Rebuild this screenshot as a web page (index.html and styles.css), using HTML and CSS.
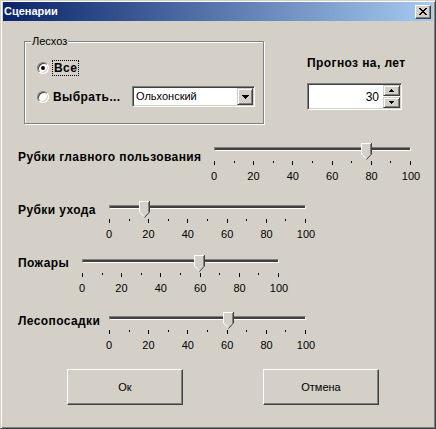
FILE: index.html
```html
<!DOCTYPE html>
<html lang="ru">
<head>
<meta charset="utf-8">
<title>Сценарии</title>
<link rel="stylesheet" href="styles.css">
</head>
<body>
<div class="window">
  <div class="titlebar">
    <span class="title">Сценарии</span>
    <button class="close" aria-label="Закрыть">
      <svg width="8" height="7" viewBox="0 0 8 7" shape-rendering="crispEdges"><path d="M0 0h2v1H0zM6 0h2v1H6zM1 1h2v1H1zM5 1h2v1H5zM2 2h4v1H2zM3 3h2v1H3zM2 4h4v1H2zM1 5h2v1H1zM5 5h2v1H5zM0 6h2v1H0zM6 6h2v1H6z" fill="#000"/></svg>
    </button>
  </div>
  <div class="content">
    <div class="top-row">
      <div class="group">
        <span class="legend">Лесхоз</span>
        <div class="opt opt-all">
          <span class="radio checked"></span>
          <span class="opt-label focus">Все</span>
        </div>
        <div class="opt opt-pick">
          <span class="radio"></span>
          <span class="opt-label">Выбрать...</span>
          <div class="combo">
            <span class="combo-val">Ольхонский</span>
            <span class="combo-btn"><svg width="7" height="4" viewBox="0 0 7 4" shape-rendering="crispEdges"><path d="M0 0h7v1H0zM1 1h5v1H1zM2 2h3v1H2zM3 3h1v1H3z" fill="#000"/></svg></span>
          </div>
        </div>
      </div>
      <div class="forecast">
        <div class="forecast-title">Прогноз на, лет</div>
        <div class="spin">
          <span class="spin-val">30</span>
          <div class="spin-btns">
            <span class="spin-btn"><svg width="5" height="3" viewBox="0 0 5 3" shape-rendering="crispEdges"><path d="M2 0h1v1H2zM1 1h3v1H1zM0 2h5v1H0z" fill="#000"/></svg></span>
            <span class="spin-btn"><svg width="5" height="3" viewBox="0 0 5 3" shape-rendering="crispEdges"><path d="M0 0h5v1H0zM1 1h3v1H1zM2 2h1v1H2z" fill="#000"/></svg></span>
          </div>
        </div>
      </div>
    </div>

    <div class="row row-1">
      <span class="row-label">Рубки главного пользования</span>
      <div class="slider">
        <div class="rail"><span class="thumb" style="left: calc(78% - 6px)"><svg width="11" height="17" viewBox="0 0 11 17" shape-rendering="crispEdges"><polygon points="0,0 11,0 11,11 5.5,16.5 0,11" fill="#d4d0c8"/><path d="M0.5 11V0.5H10" stroke="#fff" fill="none"/><path d="M0.5 11L5 15.5" stroke="#fff" fill="none" shape-rendering="auto"/><path d="M10.5 0V11" stroke="#404040" fill="none"/><path d="M9.5 1V11" stroke="#808080" fill="none"/><path d="M10.5 11L5.5 16.5" stroke="#404040" fill="none" shape-rendering="auto"/></svg></span></div>
        <div class="ticks"><i class="major"></i><i></i><i class="major"></i><i></i><i class="major"></i><i></i><i class="major"></i><i></i><i class="major"></i><i></i><i class="major"></i></div>
        <div class="scale"><span>0</span><span>20</span><span>40</span><span>60</span><span>80</span><span>100</span></div>
      </div>
    </div>

    <div class="row row-2">
      <span class="row-label">Рубки ухода</span>
      <div class="slider">
        <div class="rail"><span class="thumb" style="left: calc(18% - 6px)"><svg width="11" height="17" viewBox="0 0 11 17" shape-rendering="crispEdges"><polygon points="0,0 11,0 11,11 5.5,16.5 0,11" fill="#d4d0c8"/><path d="M0.5 11V0.5H10" stroke="#fff" fill="none"/><path d="M0.5 11L5 15.5" stroke="#fff" fill="none" shape-rendering="auto"/><path d="M10.5 0V11" stroke="#404040" fill="none"/><path d="M9.5 1V11" stroke="#808080" fill="none"/><path d="M10.5 11L5.5 16.5" stroke="#404040" fill="none" shape-rendering="auto"/></svg></span></div>
        <div class="ticks"><i class="major"></i><i></i><i class="major"></i><i></i><i class="major"></i><i></i><i class="major"></i><i></i><i class="major"></i><i></i><i class="major"></i></div>
        <div class="scale"><span>0</span><span>20</span><span>40</span><span>60</span><span>80</span><span>100</span></div>
      </div>
    </div>

    <div class="row row-3">
      <span class="row-label">Пожары</span>
      <div class="slider">
        <div class="rail"><span class="thumb" style="left: calc(60% - 6px)"><svg width="11" height="17" viewBox="0 0 11 17" shape-rendering="crispEdges"><polygon points="0,0 11,0 11,11 5.5,16.5 0,11" fill="#d4d0c8"/><path d="M0.5 11V0.5H10" stroke="#fff" fill="none"/><path d="M0.5 11L5 15.5" stroke="#fff" fill="none" shape-rendering="auto"/><path d="M10.5 0V11" stroke="#404040" fill="none"/><path d="M9.5 1V11" stroke="#808080" fill="none"/><path d="M10.5 11L5.5 16.5" stroke="#404040" fill="none" shape-rendering="auto"/></svg></span></div>
        <div class="ticks"><i class="major"></i><i></i><i class="major"></i><i></i><i class="major"></i><i></i><i class="major"></i><i></i><i class="major"></i><i></i><i class="major"></i></div>
        <div class="scale"><span>0</span><span>20</span><span>40</span><span>60</span><span>80</span><span>100</span></div>
      </div>
    </div>

    <div class="row row-4">
      <span class="row-label">Лесопосадки</span>
      <div class="slider">
        <div class="rail"><span class="thumb" style="left: calc(61% - 6px)"><svg width="11" height="17" viewBox="0 0 11 17" shape-rendering="crispEdges"><polygon points="0,0 11,0 11,11 5.5,16.5 0,11" fill="#d4d0c8"/><path d="M0.5 11V0.5H10" stroke="#fff" fill="none"/><path d="M0.5 11L5 15.5" stroke="#fff" fill="none" shape-rendering="auto"/><path d="M10.5 0V11" stroke="#404040" fill="none"/><path d="M9.5 1V11" stroke="#808080" fill="none"/><path d="M10.5 11L5.5 16.5" stroke="#404040" fill="none" shape-rendering="auto"/></svg></span></div>
        <div class="ticks"><i class="major"></i><i></i><i class="major"></i><i></i><i class="major"></i><i></i><i class="major"></i><i></i><i class="major"></i><i></i><i class="major"></i></div>
        <div class="scale"><span>0</span><span>20</span><span>40</span><span>60</span><span>80</span><span>100</span></div>
      </div>
    </div>

    <div class="buttons">
      <button class="btn">Ок</button>
      <button class="btn">Отмена</button>
    </div>
  </div>
</div>
</body>
</html>
```

FILE: styles.css
```css
html, body {
  margin: 0;
  padding: 0;
  background: #d4d0c8;
}

.window {
  width: 436px;
  height: 429px;
  box-sizing: border-box;
  border: 1px solid;
  border-color: #d4d0c8 #404040 #404040 #d4d0c8;
  box-shadow: inset 1px 1px #fff, inset -1px -1px #808080;
  padding: 1px 2px 2px 2px;
  background: #d4d0c8;
  font-family: "Liberation Sans", Arial, sans-serif;
  color: #000;
}

.titlebar {
  height: 19px;
  display: flex;
  align-items: center;
  justify-content: space-between;
  background: linear-gradient(to right, #0a246a, #a6caf0);
  padding: 0 2px 0 1px;
}

.title {
  color: #fff;
  font-weight: bold;
  font-size: 11px;
  line-height: 13px;
}

.close {
  width: 16px;
  height: 14px;
  box-sizing: border-box;
  padding: 0;
  margin: 0;
  display: flex;
  align-items: center;
  justify-content: center;
  background: #d4d0c8;
  border: 1px solid;
  border-color: #fff #404040 #404040 #fff;
  box-shadow: inset -1px -1px #808080;
}

.content {
  padding: 20px 0 0 15px;
}

.top-row {
  display: flex;
  align-items: flex-start;
}

.group {
  position: relative;
  margin-left: 6px;
  width: 240px;
  height: 83px;
  box-sizing: border-box;
  border: 1px solid #808080;
  box-shadow: inset 1px 1px #fff, 1px 1px #fff;
  padding: 18px 8px 0 12px;
  display: flex;
  flex-direction: column;
  gap: 10px;
}

.legend {
  position: absolute;
  top: -7px;
  left: 6px;
  padding: 0 1px;
  background: #d4d0c8;
  font-size: 11px;
  line-height: 13px;
}

.opt {
  display: flex;
  align-items: center;
}

.opt-all { height: 16px; }
.opt-pick { height: 21px; }

.radio {
  flex: none;
  position: relative;
  width: 12px;
  height: 12px;
  box-sizing: border-box;
  border-radius: 50%;
  border: 1px solid;
  border-color: #808080 #fff #fff #808080;
  background: #fff;
  box-shadow: inset 1px 1px #404040, inset -1px -1px #d4d0c8;
}

.radio.checked::after {
  content: "";
  position: absolute;
  left: 3px;
  top: 3px;
  width: 4px;
  height: 4px;
  border-radius: 50%;
  background: #000;
}

.opt-label {
  font-size: 12px;
  font-weight: bold;
  line-height: 14px;
  letter-spacing: 0.4px;
  margin-left: 4px;
  white-space: nowrap;
}

.opt-label.focus {
  margin-left: 4px;
  padding: 0 1px;
  outline: 1px dotted #000;
}

.combo {
  margin-left: auto;
  width: 123px;
  height: 21px;
  box-sizing: border-box;
  border: 1px solid;
  border-color: #808080 #fff #fff #808080;
  box-shadow: inset 1px 1px #404040, inset -1px -1px #d4d0c8;
  background: #fff;
  display: flex;
  align-items: center;
  padding: 1px 1px 1px 2px;
}

.combo-val {
  flex: 1;
  font-size: 11px;
  line-height: 13px;
  padding-left: 1px;
}

.combo-btn {
  flex: none;
  width: 16px;
  height: 17px;
  box-sizing: border-box;
  background: #d4d0c8;
  border: 1px solid;
  border-color: #d4d0c8 #404040 #404040 #d4d0c8;
  box-shadow: inset 1px 1px #fff, inset -1px -1px #808080;
  display: flex;
  align-items: center;
  justify-content: center;
}

.forecast {
  margin-left: 43px;
  margin-top: 15px;
}

.forecast-title {
  font-size: 12px;
  font-weight: bold;
  line-height: 14px;
  letter-spacing: 0.4px;
  white-space: nowrap;
}

.spin {
  margin-top: 13px;
  width: 95px;
  height: 27px;
  box-sizing: border-box;
  border: 1px solid;
  border-color: #808080 #fff #fff #808080;
  box-shadow: inset 1px 1px #404040, inset -1px -1px #d4d0c8;
  background: #fff;
  display: flex;
  align-items: center;
  padding: 1px 1px 1px 2px;
}

.spin-val {
  flex: 1;
  text-align: right;
  font-size: 12px;
  line-height: 14px;
  padding-right: 4px;
}

.spin-btns {
  flex: none;
  display: flex;
  flex-direction: column;
  gap: 1px;
}

.spin-btn {
  width: 17px;
  height: 11px;
  box-sizing: border-box;
  background: #d4d0c8;
  border: 1px solid;
  border-color: #d4d0c8 #404040 #404040 #d4d0c8;
  box-shadow: inset 1px 1px #fff, inset -1px -1px #808080;
  display: flex;
  align-items: center;
  justify-content: center;
}

.row {
  display: flex;
  align-items: flex-start;
}

.row-label {
  flex: none;
  font-size: 12px;
  font-weight: bold;
  line-height: 14px;
  letter-spacing: 0.4px;
  white-space: nowrap;
}

.row-1 { margin-top: 18px; }
.row-2 { margin-top: 17px; }
.row-3 { margin-top: 13px; }
.row-4 { margin-top: 16px; }

.row-1 .row-label { width: 196px; margin-top: 8px; }
.row-2 .row-label { width: 91px; margin-top: 3px; }
.row-3 .row-label { width: 64px; margin-top: 2px; }
.row-4 .row-label { width: 91px; margin-top: 3px; }

.slider {
  flex: none;
  width: 197px;
}

.rail {
  position: relative;
  height: 4px;
  margin-top: 5px;
  box-sizing: border-box;
  border: 1px solid;
  border-color: #808080 #fff #fff #808080;
  background: #404040;
}

.thumb {
  position: absolute;
  top: -5px;
  width: 11px;
  height: 17px;
  display: block;
}

.thumb svg {
  display: block;
}

.ticks {
  display: flex;
  justify-content: space-between;
  align-items: flex-start;
  margin-top: 10px;
  height: 4px;
}

.ticks i {
  display: block;
  width: 1px;
  height: 2px;
  background: #000;
}

.ticks i.major {
  height: 4px;
}

.scale {
  display: flex;
  justify-content: space-between;
  margin: 5px -15px 0;
  font-size: 11px;
  line-height: 13px;
}

.scale span {
  width: 30px;
  text-align: center;
}

.buttons {
  display: flex;
  gap: 80px;
  margin: 17px 0 0 49px;
}

.btn {
  width: 116px;
  height: 36px;
  padding: 0;
  margin: 0;
  font-family: "Liberation Sans", Arial, sans-serif;
  font-size: 11px;
  color: #000;
  background: #d4d0c8;
  border: 1px solid;
  border-color: #fff #404040 #404040 #fff;
  box-shadow: inset -1px -1px #808080;
}
```
